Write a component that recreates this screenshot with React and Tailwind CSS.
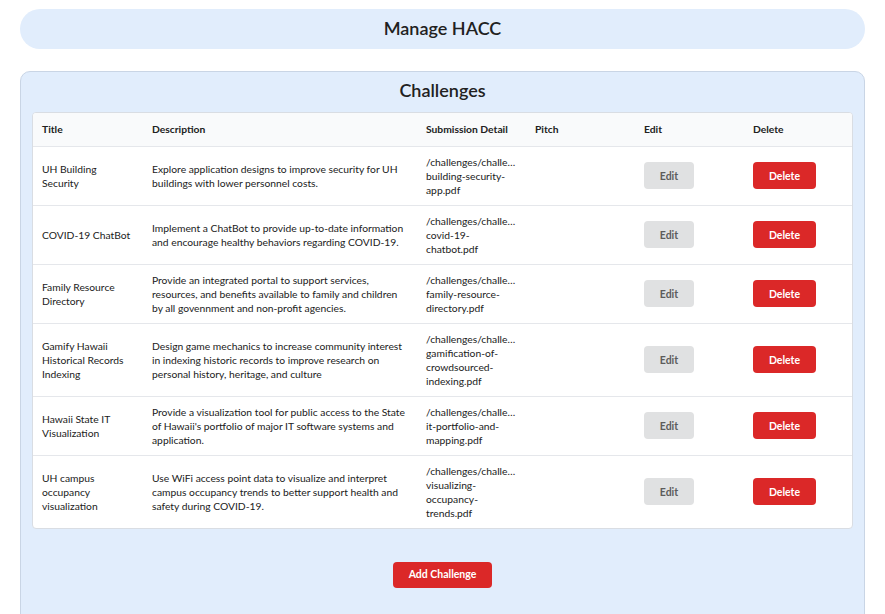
import React from 'react';

const challenges = [
  {
    title: 'UH Building Security',
    description: 'Explore application designs to improve security for UH buildings with lower personnel costs.',
    file: ['building-security-', 'app.pdf'],
  },
  {
    title: 'COVID-19 ChatBot',
    description: 'Implement a ChatBot to provide up-to-date information and encourage healthy behaviors regarding COVID-19.',
    file: ['covid-19-', 'chatbot.pdf'],
  },
  {
    title: 'Family Resource Directory',
    description: 'Provide an integrated portal to support services, resources, and benefits available to family and children by all govennment and non-profit agencies.',
    file: ['family-resource-', 'directory.pdf'],
  },
  {
    title: 'Gamify Hawaii Historical Records Indexing',
    description: 'Design game mechanics to increase community interest in indexing historic records to improve research on personal history, heritage, and culture',
    file: ['gamification-of-', 'crowdsourced-', 'indexing.pdf'],
  },
  {
    title: 'Hawaii State IT Visualization',
    description: "Provide a visualization tool for public access to the State of Hawaii's portfolio of major IT software systems and application.",
    file: ['it-portfolio-and-', 'mapping.pdf'],
  },
  {
    title: 'UH campus occupancy visualization',
    description: 'Use WiFi access point data to visualize and interpret campus occupancy trends to better support health and safety during COVID-19.',
    file: ['visualizing-', 'occupancy-', 'trends.pdf'],
  },
];

export default function App() {
  return (
    <div
      className="min-h-screen bg-white px-5 pt-[9px] text-[#212121]"
      style={{ fontFamily: 'Lato, "Open Sans", sans-serif' }}
    >
      {/* Header */}
      <div className="h-10 rounded-[20px] bg-[#e1edfc] flex items-center justify-center">
        <h1 className="text-[18px] font-semibold leading-6 -mt-[2px]">Manage HACC</h1>
      </div>

      {/* Challenges card */}
      <div className="mt-[22px] rounded-[10px] border border-[#c9d5e5] bg-[#e1edfc] px-[11px] pt-[4px] pb-10">
        <h2 className="text-center text-[18px] font-semibold leading-7 mb-[8px]">Challenges</h2>

        <div className="rounded border border-[#d9dde3] bg-white overflow-hidden">
          <table className="w-full table-fixed border-collapse text-[10.3px] leading-[14px]">
            <colgroup>
              <col className="w-[110px]" />
              <col className="w-[274px]" />
              <col className="w-[109px]" />
              <col className="w-[109px]" />
              <col className="w-[109px]" />
              <col />
            </colgroup>
            <thead>
              <tr className="bg-[#f9fafb] h-[33px] text-left">
                <th className="px-[9px] font-bold">Title</th>
                <th className="px-[9px] font-bold">Description</th>
                <th className="px-[9px] font-bold">Submission Detail</th>
                <th className="px-[9px] font-bold">Pitch</th>
                <th className="px-[9px] font-bold">Edit</th>
                <th className="px-[9px] font-bold">Delete</th>
              </tr>
            </thead>
            <tbody>
              {challenges.map((c) => (
                <tr key={c.title} className="border-t border-[#e5e7eb]">
                  <td className="px-[9px] py-2 align-middle">{c.title}</td>
                  <td className="px-[9px] py-2 align-middle">{c.description}</td>
                  <td className="px-[9px] py-2 align-middle">
                    <div>/challenges/challe…</div>
                    {c.file.map((line) => (
                      <div key={line}>{line}</div>
                    ))}
                  </td>
                  <td className="px-[9px] py-2" />
                  <td className="px-[9px] py-2 align-middle">
                    <button className="h-[27px] w-[50px] rounded bg-[#e0e1e2] text-[10.5px] font-bold text-[#5c5c5c]">
                      Edit
                    </button>
                  </td>
                  <td className="px-[9px] py-2 align-middle">
                    <button className="h-[27px] w-[63px] rounded bg-[#db2828] text-[10.5px] font-bold text-white">
                      Delete
                    </button>
                  </td>
                </tr>
              ))}
            </tbody>
          </table>
        </div>

        <div className="mt-[33px] flex justify-center">
          <button className="h-[26px] w-[99px] rounded bg-[#db2828] text-[10.5px] font-bold text-white">
            Add Challenge
          </button>
        </div>
      </div>
    </div>
  );
}
